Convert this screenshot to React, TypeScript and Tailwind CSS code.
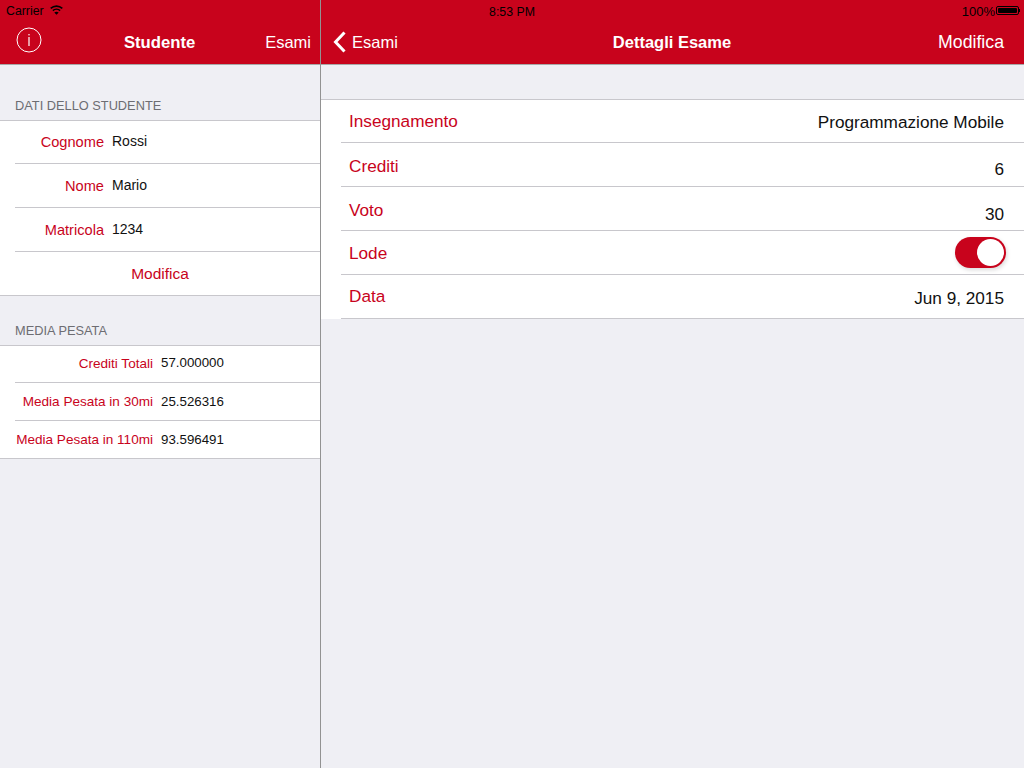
import React from "react";

const font = { fontFamily: '"Liberation Sans", Arial, sans-serif' };

function Wifi() {
  return (
    <svg width="13" height="10" viewBox="0 0 13 10" className="ml-[6px] mt-[-3px]">
      <path d="M0.7 3.4C4 0.3 9 0.3 12.3 3.4" fill="none" stroke="#000" strokeWidth="1.6" />
      <path d="M2.9 5.6C4.9 3.8 8.1 3.8 10.1 5.6" fill="none" stroke="#000" strokeWidth="1.6" />
      <path d="M6.5 9.8L4.3 7.4C5.6 6.4 7.4 6.4 8.7 7.4Z" fill="#000" />
    </svg>
  );
}

function Battery() {
  return (
    <div className="ml-[1px] mt-[-2px] flex items-center">
      <div className="h-[9px] w-[23px] rounded-[2px] border border-black p-px">
        <div className="h-full w-full rounded-[1px] bg-black" />
      </div>
      <div className="h-[3px] w-px bg-black" />
    </div>
  );
}

function InfoIcon() {
  return (
    <svg width="26" height="26" viewBox="0 0 26 26" className="mt-[-5px] block">
      <circle cx="13" cy="13" r="12" fill="none" stroke="#fff" strokeWidth="1" />
      <rect x="12.4" y="10" width="1.2" height="9" fill="#fff" />
      <rect x="12.4" y="7" width="1.2" height="1.4" fill="#fff" />
    </svg>
  );
}

function Chevron() {
  return (
    <svg width="14" height="22" viewBox="0 0 14 22" className="block">
      <path d="M11.5 1.5L2.5 11L11.5 20.5" fill="none" stroke="#fff" strokeWidth="3" />
    </svg>
  );
}

function TopRow({ label, value, h, ly, vy }: { label: string; value: string; h: string; ly: string; vy: string }) {
  return (
    <div className={`ml-[15px] flex items-center border-b border-[#c8c7cc] ${h}`}>
      <div className={`w-[89px] text-right text-[14.6px] text-[#c8031c] ${ly}`}>{label}</div>
      <div className={`ml-[8px] text-[14px] text-[#111] ${vy}`}>{value}</div>
    </div>
  );
}

function StatRow({ label, value, h, ly, vy }: { label: string; value: string; h: string; ly: string; vy: string }) {
  return (
    <div className={`ml-[15px] flex items-center border-b border-[#c8c7cc] ${h}`}>
      <div className={`w-[138px] whitespace-nowrap text-right text-[13.55px] text-[#c8031c] ${ly}`}>{label}</div>
      <div className={`ml-[8px] text-[13.3px] text-[#111] ${vy}`}>{value}</div>
    </div>
  );
}

function DetailRow({ label, value, h, ly, vy }: { label: string; value: string; h: string; ly: string; vy: string }) {
  return (
    <div className={`ml-[20px] flex items-center justify-between border-b border-[#c8c7cc] pl-[8px] pr-[20px] ${h}`}>
      <span className={`text-[17.2px] text-[#c8031c] ${ly}`}>{label}</span>
      <span className={`text-[17.2px] text-[#111] ${vy}`}>{value}</span>
    </div>
  );
}

export default function App() {
  return (
    <div style={font} className="flex h-[768px] w-[1024px] overflow-hidden bg-[#efeff4]">
      <div className="flex h-full w-[321px] shrink-0 flex-col border-r border-[#929292]">
        <header className="h-[65px] border-b border-[#a8a8a8] bg-[#c8031c]">
          <div className="flex h-[20px] items-center pl-[6px] pt-[2px] text-[12.3px] text-black">
            Carrier
            <Wifi />
          </div>
          <div className="flex h-[44px] items-center justify-between pl-[16px] pr-[9px] text-white">
            <InfoIcon />
            <span className="ml-[12px] mt-[2px] text-[16.7px] font-bold">Studente</span>
            <span className="text-[16.5px]">Esami</span>
          </div>
        </header>

        <div className="flex h-[55px] items-end pb-[5px] pl-[15px] text-[12.8px] text-[#6d6d72]">DATI DELLO STUDENTE</div>
        <section className="border-y border-[#c8c7cc] bg-white">
          <TopRow label="Cognome" value="Rossi" h="h-[43px]" ly="mt-[2px]" vy="mt-[-2px]" />
          <TopRow label="Nome" value="Mario" h="h-[44px]" ly="mt-[2px]" vy="mt-[-1px]" />
          <TopRow label="Matricola" value="1234" h="h-[44px]" ly="mt-[2px]" vy="mt-0" />
          <div className="flex h-[43px] items-center justify-center text-[15.5px] text-[#c8031c]">Modifica</div>
        </section>

        <div className="flex h-[49px] items-end pb-[5px] pl-[15px] text-[12.8px] text-[#6d6d72]">MEDIA PESATA</div>
        <section className="border-y border-[#c8c7cc] bg-white">
          <StatRow label="Crediti Totali" value="57.000000" h="h-[37px]" ly="mt-0" vy="mt-[-2px]" />
          <StatRow label="Media Pesata in 30mi" value="25.526316" h="h-[38px]" ly="mt-[2px]" vy="mt-0" />
          <div className="flex h-[37px] items-center">
            <div className="mt-[2px] w-[153px] whitespace-nowrap text-right text-[13.55px] text-[#c8031c]">Media Pesata in 110mi</div>
            <div className="ml-[8px] text-[13.3px] text-[#111]">93.596491</div>
          </div>
        </section>
      </div>

      <div className="flex h-full min-w-0 flex-1 flex-col">
        <header className="h-[65px] border-b border-[#a8a8a8] bg-[#c8031c]">
          <div className="grid h-[20px] grid-cols-[382px_1fr] items-center pt-[2px] text-[12.3px] text-black">
            <div className="text-center">8:53 PM</div>
            <div className="flex items-center justify-end pr-[4px]">
              <span className="text-[13px]">100%</span>
              <Battery />
            </div>
          </div>
          <div className="flex h-[44px] items-center justify-between pl-[12px] pr-[20px] text-white">
            <div className="flex items-center gap-[5px]">
              <Chevron />
              <span className="text-[16.5px]">Esami</span>
            </div>
            <span className="ml-[8px] text-[16.5px] font-bold">Dettagli Esame</span>
            <span className="text-[17.7px]">Modifica</span>
          </div>
        </header>

        <div className="h-[34px]" />
        <section className="w-full border-t border-[#c8c7cc] bg-white">
          <DetailRow label="Insegnamento" value="Programmazione Mobile" h="h-[43px]" ly="mt-[1px]" vy="mt-[4px]" />
          <DetailRow label="Crediti" value="6" h="h-[44px]" ly="mt-[4px]" vy="mt-[11px]" />
          <DetailRow label="Voto" value="30" h="h-[44px]" ly="mt-[4px]" vy="mt-[13px]" />
          <div className="ml-[20px] flex h-[44px] items-center justify-between border-b border-[#c8c7cc] pl-[8px] pr-[18px]">
            <span className="mt-[2px] text-[17.2px] text-[#c8031c]">Lode</span>
            <div className="flex h-[31px] w-[51px] items-center justify-end rounded-full bg-[#c8031c] pr-[2px] shadow-[1px_2px_4px_rgba(0,0,0,0.15)]">
              <div className="h-[27px] w-[27px] rounded-full bg-white" />
            </div>
          </div>
          <DetailRow label="Data" value="Jun 9, 2015" h="h-[44px]" ly="mt-0" vy="mt-[5px]" />
        </section>
      </div>
    </div>
  );
}
